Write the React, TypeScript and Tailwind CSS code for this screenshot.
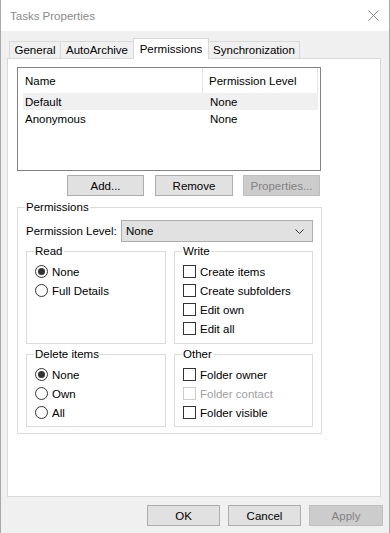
import React from "react";

function Radio({ label, checked }: { label: string; checked?: boolean }) {
  return (
    <div className="flex items-center h-[19px]">
      <span className="w-[13px] h-[13px] rounded-full border border-[#333333] bg-white flex items-center justify-center shrink-0">
        {checked && <span className="w-[7px] h-[7px] rounded-full bg-[#333333]" />}
      </span>
      <span className="ml-[4px] text-black">{label}</span>
    </div>
  );
}

function Check({ label, disabled }: { label: string; disabled?: boolean }) {
  return (
    <div className="flex items-center h-[19px]">
      <span
        className={
          disabled
            ? "w-[13px] h-[13px] border border-[#cccccc] bg-white shrink-0"
            : "w-[13px] h-[13px] border border-[#333333] bg-white shrink-0"
        }
      />
      <span className={disabled ? "ml-[4px] text-[#a0a0a0]" : "ml-[4px] text-black"}>{label}</span>
    </div>
  );
}

function Group({
  title,
  className,
  children,
}: {
  title: string;
  className: string;
  children: React.ReactNode;
}) {
  return (
    <fieldset className={"border border-[#dcdcdc] px-0 pb-0 m-0 min-w-0 " + className}>
      <legend className="ml-[7px] px-[1px] leading-[16px] text-black">{title}</legend>
      <div className="pl-[8px] mt-[3px] flex flex-col">{children}</div>
    </fieldset>
  );
}

export default function App() {
  return (
    <div className="w-[390px] h-[533px] bg-[#f0f0f0] border-x border-[#a9a9a9] flex flex-col overflow-hidden font-['Segoe_UI','Liberation_Sans',Arial,sans-serif] text-[11.5px] leading-[16px] text-black">
      {/* title bar */}
      <div className="h-[31px] bg-white flex items-center justify-between pl-[9px] pr-[10px] shrink-0">
        <span className="text-[#8a8a8a] text-[11.5px]">Tasks Properties</span>
        <svg width="11" height="11" viewBox="0 0 11 11" className="mb-[1px]">
          <path d="M0.5 0.5 L10.5 10.5 M10.5 0.5 L0.5 10.5" stroke="#8a8a8a" strokeWidth="1" fill="none" />
        </svg>
      </div>

      {/* tabs */}
      <div className="relative z-10 mt-[7px] ml-[8px] h-[21px] -mb-[1px] flex items-end shrink-0">
        <div className="h-[17px] mb-[1px] w-[51px] border-l border-t border-[#d9d9d9] bg-[#f0f0f0] flex items-center justify-center">
          General
        </div>
        <div className="h-[17px] mb-[1px] w-[73px] border-l border-t border-[#d9d9d9] bg-[#f0f0f0] flex items-center justify-center">
          AutoArchive
        </div>
        <div className="h-[21px] w-[76px] border-l border-t border-r border-[#d9d9d9] bg-white flex items-center justify-center pb-[1px]">
          Permissions
        </div>
        <div className="h-[17px] mb-[1px] w-[91px] border-t border-r border-[#d9d9d9] bg-[#f0f0f0] flex items-center justify-center">
          Synchronization
        </div>
      </div>

      {/* panel */}
      <div className="ml-[6px] w-[374px] h-[439px] border border-[#d9d9d9] bg-white flex flex-col shrink-0">
        {/* list */}
        <div className="ml-[9px] mt-[8px] w-[304px] h-[104px] border border-[#828282] flex flex-col shrink-0">
          <div className="h-[25px] flex items-stretch">
            <div className="ml-[5px] w-[180px] border-r border-[#e5e5e5] flex items-center pl-[2px]">Name</div>
            <div className="w-[115px] border-r border-[#e5e5e5] flex items-center pl-[6px]">Permission Level</div>
          </div>
          <div className="ml-[5px] w-[295px] h-[17px] bg-[#f0f0f0] flex items-center">
            <div className="w-[180px] pl-[2px]">Default</div>
            <div className="pl-[7px]">None</div>
          </div>
          <div className="ml-[5px] w-[295px] h-[17px] flex items-center">
            <div className="w-[180px] pl-[2px]">Anonymous</div>
            <div className="pl-[7px]">None</div>
          </div>
        </div>

        {/* list buttons */}
        <div className="ml-[59px] mt-[4px] flex shrink-0">
          <button className="w-[77px] h-[21px] bg-[#e1e1e1] border border-[#adadad] text-black">Add...</button>
          <button className="ml-[11px] w-[78px] h-[21px] bg-[#e1e1e1] border border-[#adadad] text-black">Remove</button>
          <button className="ml-[10px] w-[77px] h-[21px] bg-[#cccccc] border border-[#bfbfbf] text-[#838383]">
            Properties...
          </button>
        </div>

        {/* permissions group */}
        <fieldset className="ml-[9px] mt-[3px] w-[305px] h-[235px] border border-[#dcdcdc] px-0 pb-0 m-0 min-w-0 shrink-0">
          <legend className="ml-[7px] px-[1px] leading-[16px]">Permissions</legend>
          <div className="mt-[5px] flex items-center h-[22px]">
            <span className="ml-[8px] w-[95px] whitespace-nowrap">Permission Level:</span>
            <div className="w-[192px] h-[22px] bg-[#e1e1e1] border border-[#adadad] flex items-center justify-between pl-[4px] pr-[8px]">
              <span>None</span>
              <svg width="9" height="5" viewBox="0 0 9 5">
                <path d="M0.5 0.5 L4.5 4.5 L8.5 0.5" stroke="#333333" strokeWidth="1" fill="none" />
              </svg>
            </div>
          </div>
          <div className="mt-[1px] ml-[8px] grid grid-cols-[140px_139px] gap-x-[8px]">
            <Group title="Read" className="h-[101px]">
              <Radio label="None" checked />
              <Radio label="Full Details" />
            </Group>
            <Group title="Write" className="h-[101px]">
              <Check label="Create items" />
              <Check label="Create subfolders" />
              <Check label="Edit own" />
              <Check label="Edit all" />
            </Group>
          </div>
          <div className="mt-[2px] ml-[8px] grid grid-cols-[140px_139px] gap-x-[8px]">
            <Group title="Delete items" className="h-[81px]">
              <Radio label="None" checked />
              <Radio label="Own" />
              <Radio label="All" />
            </Group>
            <Group title="Other" className="h-[81px]">
              <Check label="Folder owner" />
              <Check label="Folder contact" disabled />
              <Check label="Folder visible" />
            </Group>
          </div>
        </fieldset>
      </div>

      {/* dialog buttons */}
      <div className="mt-[8px] flex justify-end pr-[6px] shrink-0">
        <button className="w-[73px] h-[21px] bg-[#e1e1e1] border border-[#adadad] text-black">OK</button>
        <button className="ml-[8px] w-[73px] h-[21px] bg-[#e1e1e1] border border-[#adadad] text-black">Cancel</button>
        <button className="ml-[8px] w-[74px] h-[21px] bg-[#cccccc] border border-[#bfbfbf] text-[#838383]">Apply</button>
      </div>
    </div>
  );
}
